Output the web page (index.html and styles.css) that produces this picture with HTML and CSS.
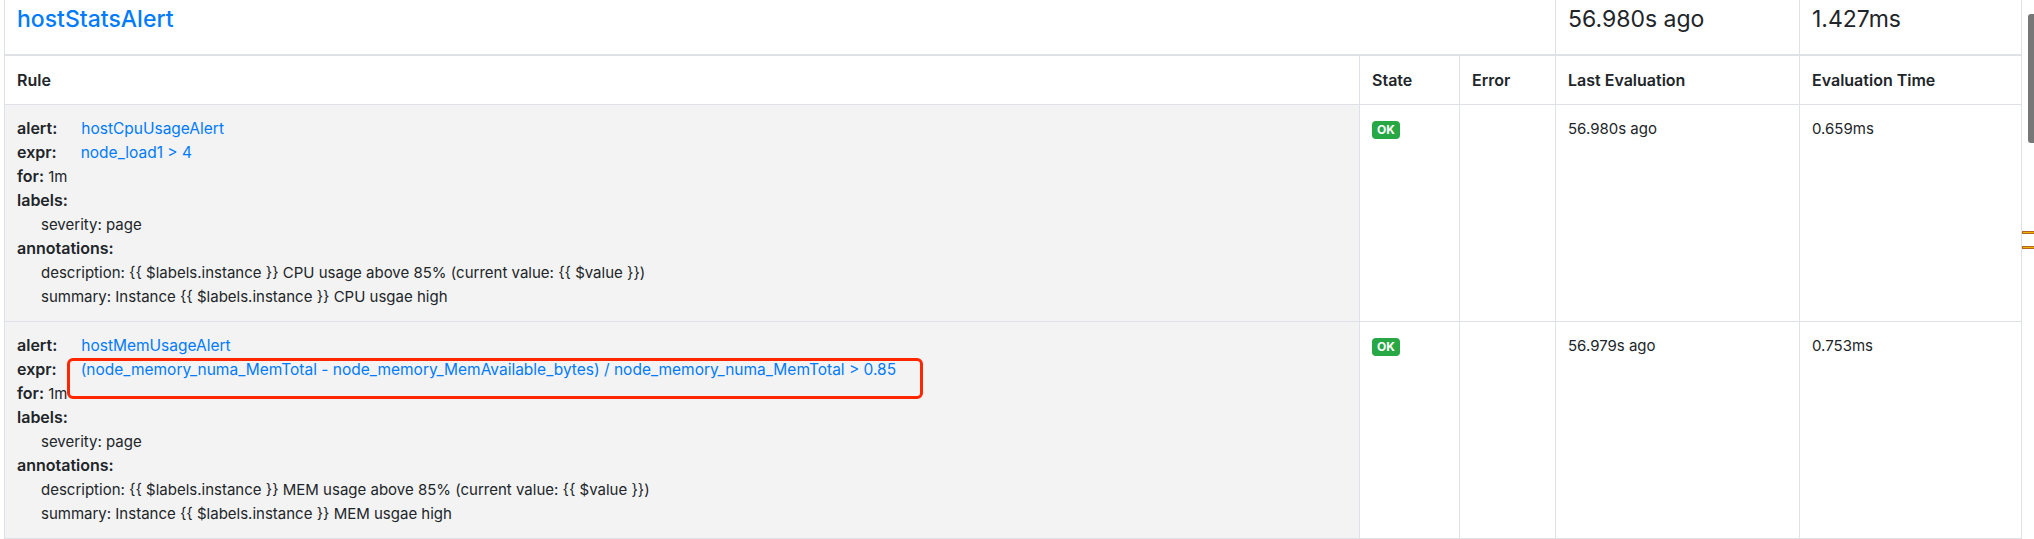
FILE: index.html
```html
<!DOCTYPE html>
<html lang="en">

<head>
  <meta charset="UTF-8">
  <title>Rules</title>
  <link rel="stylesheet" href="styles.css">
</head>

<body>
  <table class="rules">
    <colgroup>
      <col class="col-rule">
      <col class="col-state">
      <col class="col-error">
      <col class="col-last">
      <col class="col-time">
    </colgroup>
    <thead>
      <tr class="group">
        <th colspan="3" class="group-name"><a href="#">hostStatsAlert</a></th>
        <th class="group-stat">56.980s ago</th>
        <th class="group-stat">1.427ms</th>
      </tr>
    </thead>
    <tbody>
      <tr class="head">
        <td>Rule</td>
        <td>State</td>
        <td>Error</td>
        <td>Last Evaluation</td>
        <td>Evaluation Time</td>
      </tr>
      <tr>
        <td class="rule">
          <div><b>alert:</b><a class="val" href="#">hostCpuUsageAlert</a></div>
          <div><b>expr:</b><a class="val" href="#">node_load1 &gt; 4</a></div>
          <div><b>for:</b> 1m</div>
          <div><b>labels:</b></div>
          <div class="sub">severity: page</div>
          <div><b>annotations:</b></div>
          <div class="sub">description: {{ $labels.instance }} CPU usage above 85% (current value: {{ $value }})</div>
          <div class="sub">summary: Instance {{ $labels.instance }} CPU usgae high</div>
        </td>
        <td><span class="badge">OK</span></td>
        <td></td>
        <td>56.980s ago</td>
        <td>0.659ms</td>
      </tr>
      <tr>
        <td class="rule">
          <div><b>alert:</b><a class="val" href="#">hostMemUsageAlert</a></div>
          <div><b>expr:</b><a class="val" href="#">(node_memory_numa_MemTotal - node_memory_MemAvailable_bytes) / node_memory_numa_MemTotal &gt; 0.85</a></div>
          <div><b>for:</b> 1m</div>
          <div><b>labels:</b></div>
          <div class="sub">severity: page</div>
          <div><b>annotations:</b></div>
          <div class="sub">description: {{ $labels.instance }} MEM usage above 85% (current value: {{ $value }})</div>
          <div class="sub">summary: Instance {{ $labels.instance }} MEM usgae high</div>
        </td>
        <td><span class="badge">OK</span></td>
        <td></td>
        <td>56.979s ago</td>
        <td>0.753ms</td>
      </tr>
    </tbody>
  </table>

  <!-- annotation drawn over the screenshot -->
  <div class="highlight"></div>

  <div class="scroll-thumb"></div>
  <div class="tick tick-1"></div>
  <div class="tick tick-2"></div>
</body>

</html>
```

FILE: styles.css
```css
html, body {
  margin: 0;
  height: 100%;
  overflow: hidden;
  background: #fff;
}

body {
  position: relative;
  font-family: Inter, "Liberation Sans", sans-serif;
  font-size: 15px;
  line-height: 24px;
  color: #212529;
}

a {
  color: #007bff;
  text-decoration: none;
}

.rules {
  width: 2018px;
  margin: -8px 0 0 4px;
  table-layout: fixed;
  border-collapse: collapse;
}

.col-state { width: 100px; }
.col-error { width: 96px; }
.col-last { width: 244px; }
.col-time { width: 222px; }

.rules th,
.rules td {
  padding: 12px;
  border: 1px solid #dee2e6;
  vertical-align: top;
  text-align: left;
}

.rules thead th {
  padding-bottom: 20px;
  border-bottom: 2px solid #dee2e6;
  font-size: 23px;
  line-height: 29px;
  font-weight: 400;
}

.rules thead .group-name {
  font-weight: 500;
}

.head td {
  font-size: 16px;
  font-weight: 600;
}

.rules td.rule {
  background: #f3f3f3;
}

/* line-height 1 keeps the bigger inline text from stretching the 24px lines */
.rule b {
  font-size: 16px;
  font-weight: 600;
  line-height: 1;
}

.val {
  margin-left: 24px;
  font-size: 15.5px;
  line-height: 1;
}

.sub {
  padding-left: 24px;
}

.badge {
  display: inline-block;
  margin-top: 4px;
  padding: 3px 5px;
  border-radius: 4px;
  background: #28a745;
  color: #fff;
  font-size: 12px;
  font-weight: 700;
  line-height: 12px;
  vertical-align: top;
}

.highlight {
  position: absolute;
  left: 67px;
  top: 358px;
  width: 856px;
  height: 41px;
  box-sizing: border-box;
  border: 3px solid #ff2600;
  border-radius: 6px;
}

.scroll-thumb {
  position: absolute;
  left: 2028px;
  top: 14px;
  width: 6px;
  height: 129px;
  border-radius: 3px 0 0 3px;
  background: #777;
}

.tick {
  position: absolute;
  left: 2022px;
  width: 12px;
  height: 3px;
  box-sizing: border-box;
  background: #e8b400;
  border: 1px solid #b5651d;
  border-right: 0;
}

.tick-1 { top: 231px; }
.tick-2 { top: 246px; }
```
